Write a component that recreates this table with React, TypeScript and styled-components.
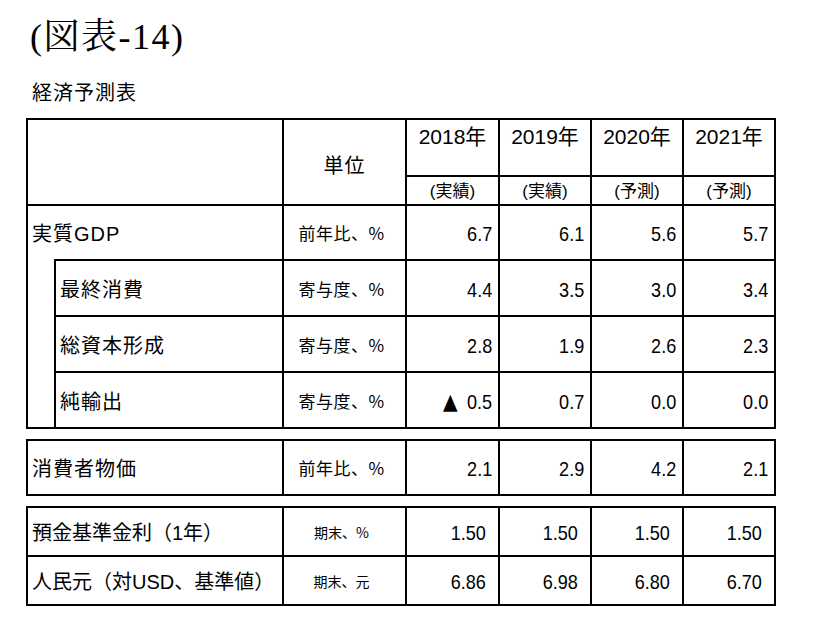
import React from "react";
import styled, { createGlobalStyle } from "styled-components";

const GlobalStyle = createGlobalStyle`
  html, body { margin: 0; padding: 0; background: #fff; }
  body {
    font-family: "Liberation Sans", "Noto Sans CJK JP", sans-serif;
    color: #000;
  }
`;

const Page = styled.div`
  width: 816px;
  height: 625px;
  box-sizing: border-box;
  padding: 14px 0 0 26px;
  display: flex;
  flex-direction: column;
`;

const Title = styled.h1`
  margin: 0 0 0 4px;
  font-family: "Liberation Serif", "Noto Serif CJK JP", "Noto Sans CJK JP", serif;
  font-weight: normal;
  font-size: 36px;
  line-height: 46px;
  letter-spacing: 1.5px;
`;

const Caption = styled.h2`
  margin: 20px 0 0 6px;
  font-family: "Noto Sans CJK JP", sans-serif;
  font-weight: normal;
  font-size: 20px;
  line-height: 24px;
  letter-spacing: 1px;
`;

const Tables = styled.div`
  margin-top: 14px;
  display: flex;
  flex-direction: column;
  gap: 10px;
`;

const Table = styled.table`
  border-collapse: collapse;
  table-layout: fixed;
  width: 750px;
  border: 2px solid #000;
`;

const Row = styled.tr<{ $h: number }>`
  height: ${(p) => p.$h}px;
`;

const Cell = styled.td`
  border: 2px solid #000;
  padding: 0;
  white-space: nowrap;
`;

const Blank = styled(Cell)``;

const UnitHead = styled(Cell)`
  text-align: center;
  font-family: "Noto Sans CJK JP", sans-serif;
  font-size: 20px;
  letter-spacing: 1px;
  padding-top: 4px;
`;

const YearHead = styled(Cell)`
  vertical-align: top;
  text-align: center;
  padding-top: 5px;
  font-family: "Liberation Sans", "Noto Sans CJK JP", sans-serif;
  font-size: 21px;
  line-height: 24px;
`;

const SubHead = styled(Cell)`
  text-align: center;
  font-family: "Liberation Sans", "Noto Sans CJK JP", sans-serif;
  font-size: 17px;
  line-height: 20px;
  padding-top: 2px;
`;

const Label = styled(Cell)<{ $open?: boolean; $tight?: boolean }>`
  padding-left: 4px;
  font-family: "Liberation Sans", "Noto Sans CJK JP", sans-serif;
  font-size: 20px;
  letter-spacing: ${(p) => (p.$tight ? 0 : 1)}px;
  ${(p) => (p.$open ? "border-bottom: none;" : "")}
`;

const Indent = styled(Cell)`
  border-top: none;
`;

const Unit = styled(Cell)<{ $small?: boolean }>`
  text-align: center;
  font-family: "Noto Sans CJK JP", sans-serif;
  font-size: ${(p) => (p.$small ? 14 : 17)}px;
  letter-spacing: ${(p) => (p.$small ? 0 : 0.5)}px;
  padding-right: 6px;
`;

const Num = styled(Cell)<{ $pad?: number }>`
  text-align: right;
  padding-right: ${(p) => p.$pad ?? 6}px;
  padding-top: 3px;
  font-family: "Liberation Sans", sans-serif;
  font-size: 21px;
`;

const Digits = styled.span`
  display: inline-block;
  transform: scaleX(0.86);
  transform-origin: 100% 50%;
`;

const Tri = styled.span`
  font-family: "DejaVu Sans", sans-serif;
  font-size: 22px;
  margin-right: 11px;
`;

const Cols = () => (
  <colgroup>
    <col style={{ width: 28 }} />
    <col style={{ width: 228 }} />
    <col style={{ width: 123 }} />
    <col style={{ width: 93 }} />
    <col style={{ width: 92 }} />
    <col style={{ width: 92 }} />
    <col style={{ width: 92 }} />
  </colgroup>
);

const years = [
  { y: "2018年", k: "(実績)" },
  { y: "2019年", k: "(実績)" },
  { y: "2020年", k: "(予測)" },
  { y: "2021年", k: "(予測)" },
];

const subRows = [
  { label: "最終消費", unit: "寄与度、%", vals: ["4.4", "3.5", "3.0", "3.4"], h: 56 },
  { label: "総資本形成", unit: "寄与度、%", vals: ["2.8", "1.9", "2.6", "2.3"], h: 56 },
  { label: "純輸出", unit: "寄与度、%", vals: ["▲0.5", "0.7", "0.0", "0.0"], h: 56 },
];

const Value = ({ v }: { v: string }) =>
  v.startsWith("▲") ? (
    <Digits>
      <Tri>▲</Tri>
      {v.slice(1)}
    </Digits>
  ) : (
    <Digits>{v}</Digits>
  );

const Values = ({ vals, pad }: { vals: string[]; pad?: number }) => (
  <>
    {vals.map((v, i) => (
      <Num key={i} $pad={pad}>
        <Value v={v} />
      </Num>
    ))}
  </>
);

export default function App() {
  return (
    <>
      <GlobalStyle />
      <Page>
        <Title>(図表-14)</Title>
        <Caption>経済予測表</Caption>
        <Tables>
          <Table>
            <Cols />
            <tbody>
              <Row $h={57}>
                <Blank colSpan={2} rowSpan={2} />
                <UnitHead rowSpan={2}>単位</UnitHead>
                {years.map((y) => (
                  <YearHead key={y.y}>{y.y}</YearHead>
                ))}
              </Row>
              <Row $h={29}>
                {years.map((y, i) => (
                  <SubHead key={i}>{y.k}</SubHead>
                ))}
              </Row>
              <Row $h={55}>
                <Label colSpan={2} $open>
                  実質GDP
                </Label>
                <Unit>前年比、%</Unit>
                <Values vals={["6.7", "6.1", "5.6", "5.7"]} />
              </Row>
              {subRows.map((r, idx) => (
                <Row $h={r.h} key={r.label}>
                  {idx === 0 && <Indent rowSpan={3} />}
                  <Label>{r.label}</Label>
                  <Unit>{r.unit}</Unit>
                  <Values vals={r.vals} />
                </Row>
              ))}
            </tbody>
          </Table>

          <Table>
            <Cols />
            <tbody>
              <Row $h={55}>
                <Label colSpan={2}>消費者物価</Label>
                <Unit>前年比、%</Unit>
                <Values vals={["2.1", "2.9", "4.2", "2.1"]} />
              </Row>
            </tbody>
          </Table>

          <Table>
            <Cols />
            <tbody>
              <Row $h={49}>
                <Label colSpan={2} $tight>
                  預金基準金利（1年）
                </Label>
                <Unit $small>期末、%</Unit>
                <Values vals={["1.50", "1.50", "1.50", "1.50"]} pad={12} />
              </Row>
              <Row $h={49}>
                <Label colSpan={2} $tight>
                  人民元（対USD、基準値）
                </Label>
                <Unit $small>期末、元</Unit>
                <Values vals={["6.86", "6.98", "6.80", "6.70"]} pad={12} />
              </Row>
            </tbody>
          </Table>
        </Tables>
      </Page>
    </>
  );
}
